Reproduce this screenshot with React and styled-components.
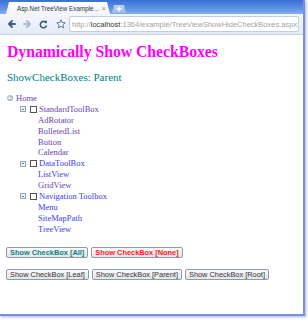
import React from "react";
import styled, { createGlobalStyle } from "styled-components";

const Global = createGlobalStyle`
  html, body { margin: 0; padding: 0; background: #fff; }
  body { width: 308px; height: 320px; overflow: hidden; }
`;

const Page = styled.div`
  width: 308px;
  height: 320px;
  background: #fbfcff;
`;

const Window = styled.div`
  width: 303px;
  height: 314px;
  display: flex;
  flex-direction: column;
  background: #fff;
  border-right: 2px solid #7d8ee2;
  border-bottom: 2px solid #7d8ee2;
  box-shadow: 1px 1px 2px rgba(110, 130, 225, 0.6);
  overflow: hidden;
`;

const TabStrip = styled.div`
  height: 14px;
  flex: none;
  display: flex;
  align-items: flex-end;
  gap: 2px;
  padding-left: 6px;
  background: linear-gradient(to bottom, #3a6fd6 0%, #5f92e4 60%, #86aeee 100%);
`;

const Tab = styled.div`
  width: 104px;
  height: 12px;
  display: flex;
  align-items: center;
  gap: 3px;
  padding: 0 6px 0 8px;
  box-sizing: border-box;
  background: linear-gradient(to bottom, #ffffff, #f1f5fb);
  clip-path: polygon(3px 0, calc(100% - 3px) 0, 100% 100%, 0 100%);
  font: 6.3px "Liberation Sans", Arial, sans-serif;
  color: #333;
`;

const TabTitle = styled.span`
  flex: 1;
  white-space: nowrap;
`;

const Close = styled.span`
  color: #888;
  font-size: 7px;
`;

const NewTab = styled.div`
  width: 14px;
  height: 8px;
  margin-bottom: 1px;
  display: flex;
  align-items: center;
  justify-content: center;
  background: linear-gradient(to bottom, #b9d0f3, #9dbbea);
  clip-path: polygon(2px 0, calc(100% - 2px) 0, 100% 100%, 0 100%);
`;

const Toolbar = styled.div`
  height: 20px;
  flex: none;
  display: flex;
  align-items: center;
  padding: 0 4px 0 3px;
  background: linear-gradient(to bottom, #f3f6fb, #e4ecf7);
  border-bottom: 1px solid #c9d2de;
`;

const NavButton = styled.div`
  width: 16px;
  height: 14px;
  margin-left: ${(p) => p.$shift || 0}px;
  display: flex;
  align-items: center;
  justify-content: center;
  flex: none;
`;

const UrlBox = styled.div`
  flex: 1;
  height: 14px;
  display: flex;
  align-items: center;
  padding-left: 2px;
  background: #fff;
  border: 1px solid #c3cedd;
  border-radius: 2px;
  font: 7.5px "Liberation Sans", Arial, sans-serif;
  color: #a3a3a3;
  white-space: nowrap;
  overflow: hidden;
`;

const Host = styled.span`
  color: #333;
`;

const Content = styled.div`
  flex: 1;
  padding: 8px 7px 0 7px;
  font-family: "Liberation Serif", "Times New Roman", serif;
`;

const Heading = styled.h1`
  margin: 0;
  font-size: 15.7px;
  font-weight: bold;
  color: #ff00ff;
  line-height: 18px;
`;

const Status = styled.div`
  margin-top: 10px;
  font-size: 11px;
  line-height: 13px;
  color: #008080;
`;

const Tree = styled.div`
  margin-top: 9px;
  display: flex;
  flex-direction: column;
`;

const Row = styled.div`
  height: 10.9px;
  display: flex;
  align-items: center;
  padding-left: ${(p) => p.$indent}px;
  font-size: 8.5px;
  line-height: 11px;
  color: ${(p) => (p.$visited ? "#6a3fb5" : "#3b3bf0")};
  white-space: nowrap;
`;

const Toggle = styled.span`
  width: 6px;
  height: 6px;
  box-sizing: border-box;
  border: 1px solid #9aa6b4;
  background: #eef1f5;
  position: relative;
  margin-right: 4px;
  flex: none;
  &::after {
    content: "";
    position: absolute;
    left: 1px;
    right: 1px;
    top: 1.5px;
    height: 1px;
    background: #6d7884;
  }
`;

const Globe = styled.span`
  width: 6px;
  height: 6px;
  border-radius: 50%;
  background: radial-gradient(circle at 35% 35%, #d6dbe2, #8a94a2);
  position: relative;
  flex: none;
  margin-right: 3px;
  &::after {
    content: "";
    position: absolute;
    left: 1px;
    right: 1px;
    top: 2.5px;
    height: 1px;
    background: #f5f7fa;
  }
`;

const Box = styled.span`
  width: 7px;
  height: 7px;
  box-sizing: border-box;
  border: 1px solid #555;
  background: #fff;
  flex: none;
  margin-right: 2px;
`;

const ButtonRow = styled.div`
  display: flex;
  gap: 3px;
  margin-top: ${(p) => p.$top}px;
  margin-left: -1px;
`;

const Btn = styled.button`
  height: 11px;
  padding: 0 3px;
  display: flex;
  align-items: center;
  font: ${(p) => (p.$bold ? "bold" : "normal")} 7.4px "Liberation Sans", Arial, sans-serif;
  color: ${(p) => p.$color || "#333"};
  background: linear-gradient(to bottom, #fbfbfb, #e3e4e8);
  border: 1px solid #8e99ab;
  border-radius: 2px;
  white-space: nowrap;
  cursor: pointer;
`;

const tree = [
  { t: "Home", kind: "root", v: true },
  { t: "StandardToolBox", kind: "parent", v: true },
  { t: "AdRotator", v: true },
  { t: "BulletedList", v: true },
  { t: "Button", v: true },
  { t: "Calendar", v: true },
  { t: "DataToolBox", kind: "parent", v: false },
  { t: "ListView", v: false },
  { t: "GridView", v: true },
  { t: "Navigation Toolbox", kind: "parent", v: false },
  { t: "Menu", v: false },
  { t: "SiteMapPath", v: false },
  { t: "TreeView", v: false },
];

function Arrow({ dir, color }) {
  const d = dir === "left" ? "M8 4 H2 M5 1 L2 4 L5 7" : "M1 4 H7 M4 1 L7 4 L4 7";
  return (
    <svg width="9" height="8" viewBox="0 0 9 8">
      <path d={d} fill="none" stroke={color} strokeWidth="1.8" strokeLinecap="round" strokeLinejoin="round" />
    </svg>
  );
}

export default function App() {
  return (
    <>
      <Global />
      <Page>
        <Window>
          <TabStrip>
            <Tab>
              <svg width="6" height="7" viewBox="0 0 6 7">
                <path d="M0.5 0.5 H4 L5.5 2 V6.5 H0.5 Z" fill="#fff" stroke="#888" strokeWidth="0.8" />
              </svg>
              <TabTitle>Asp.Net TreeView Example...</TabTitle>
              <Close>×</Close>
            </Tab>
            <NewTab>
              <svg width="6" height="6" viewBox="0 0 6 6">
                <path d="M3 0.5 V5.5 M0.5 3 H5.5" stroke="#fff" strokeWidth="1.4" />
              </svg>
            </NewTab>
          </TabStrip>
          <Toolbar>
            <NavButton>
              <Arrow dir="left" color="#3b5a8c" />
            </NavButton>
            <NavButton>
              <Arrow dir="right" color="#a7b9d6" />
            </NavButton>
            <NavButton>
              <svg width="9" height="9" viewBox="0 0 9 9">
                <path d="M7.3 3 A3.2 3.2 0 1 0 7.6 5.5" fill="none" stroke="#3b5a8c" strokeWidth="1.6" />
                <path d="M5.5 0.8 L8 0.8 L8 3.4 Z" fill="#3b5a8c" />
              </svg>
            </NavButton>
            <NavButton $shift={2}>
              <svg width="10" height="10" viewBox="0 0 10 10">
                <path
                  d="M5 0.8 L6.2 3.6 L9.2 3.8 L6.9 5.8 L7.6 8.8 L5 7.2 L2.4 8.8 L3.1 5.8 L0.8 3.8 L3.8 3.6 Z"
                  fill="#fff"
                  stroke="#4a6a9a"
                  strokeWidth="0.9"
                  strokeLinejoin="round"
                />
              </svg>
            </NavButton>
            <UrlBox>
              http://<Host>localhost</Host>:1364/example/TreeViewShowHideCheckBoxes.aspx
            </UrlBox>
          </Toolbar>
          <Content>
            <Heading>Dynamically Show CheckBoxes</Heading>
            <Status>ShowCheckBoxes: Parent</Status>
            <Tree>
              {tree.map((n) => (
                <Row
                  key={n.t}
                  $indent={n.kind === "root" ? 0 : n.kind === "parent" ? 13 : 31}
                  $visited={n.v}
                >
                  {n.kind === "root" && <Globe />}
                  {n.kind === "parent" && (
                    <>
                      <Toggle />
                      <Box />
                    </>
                  )}
                  {n.t}
                </Row>
              ))}
            </Tree>
            <ButtonRow $top={12}>
              <Btn $bold $color="#0f8080">Show CheckBox [All]</Btn>
              <Btn $bold $color="#ff1a1a">Show CheckBox [None]</Btn>
            </ButtonRow>
            <ButtonRow $top={11}>
              <Btn>Show CheckBox [Leaf]</Btn>
              <Btn>Show CheckBox [Parent]</Btn>
              <Btn>Show CheckBox [Root]</Btn>
            </ButtonRow>
          </Content>
        </Window>
      </Page>
    </>
  );
}
